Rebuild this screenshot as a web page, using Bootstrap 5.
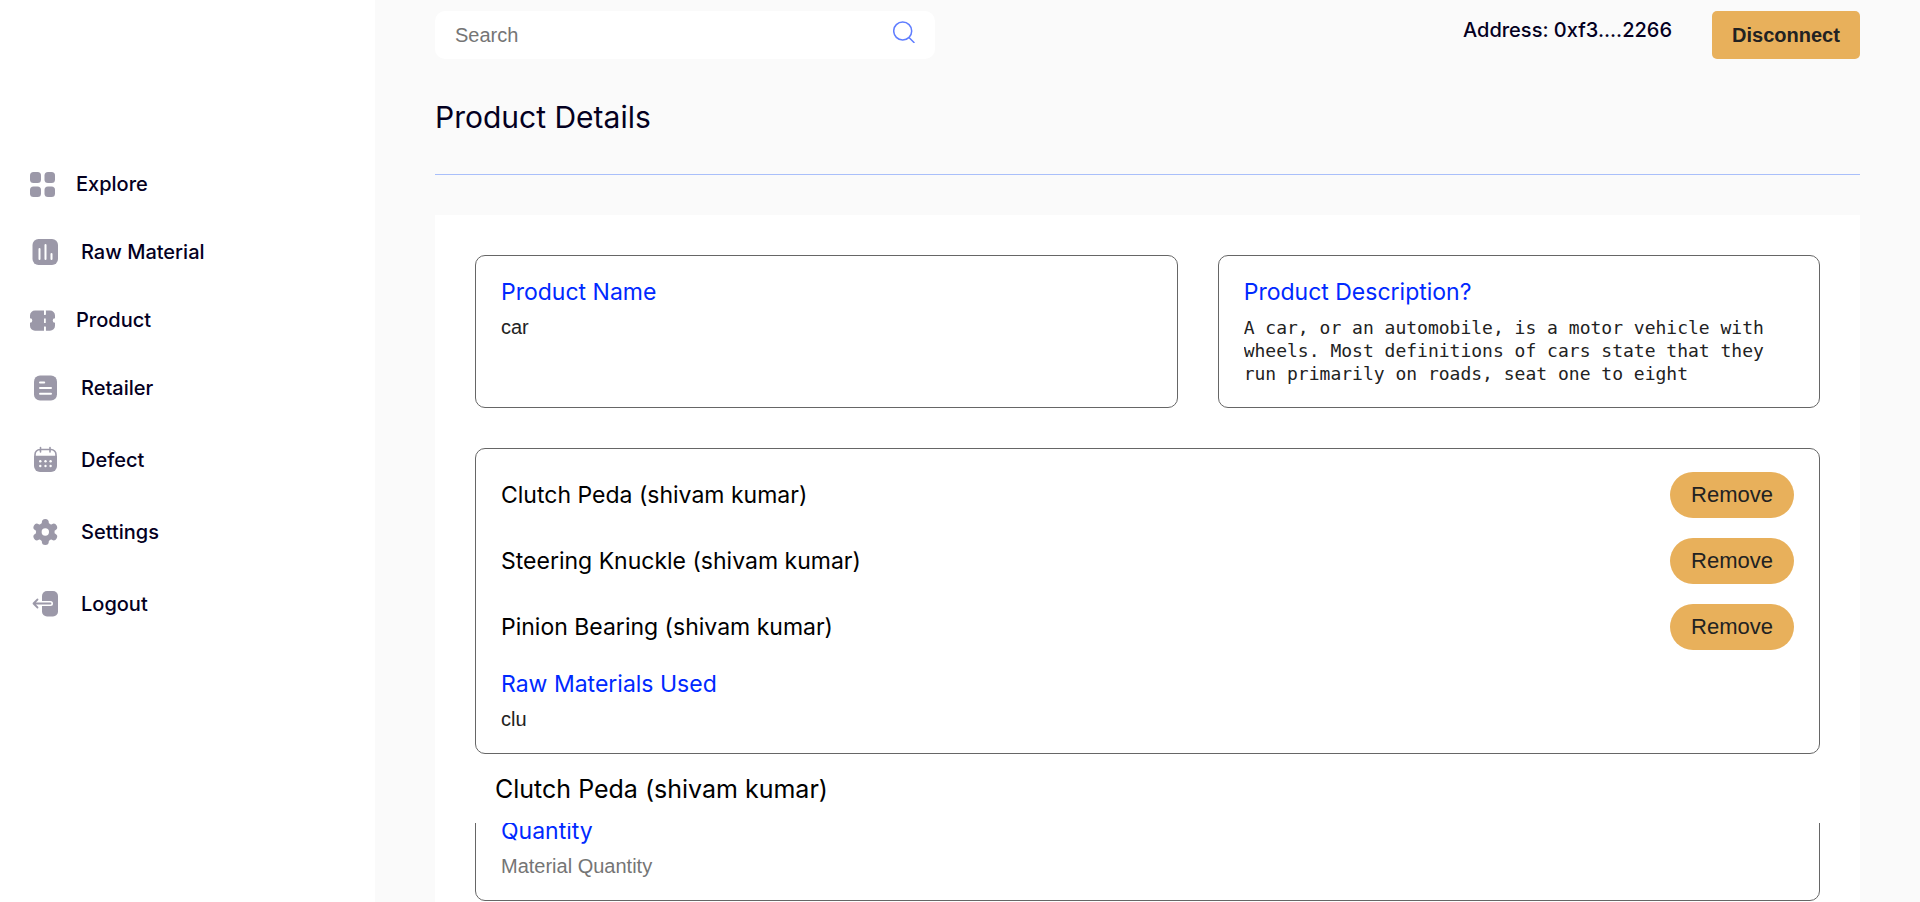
<!DOCTYPE html>
<html lang="en">
<head>
<meta charset="utf-8">
<meta name="viewport" content="width=device-width, initial-scale=1">
<title>Product Details</title>
<link href="https://cdn.jsdelivr.net/npm/bootstrap@5.3.0/dist/css/bootstrap.min.css" rel="stylesheet">
<style>
  :root { --ink: #04001f; --muted-icon: #9b98a8; --gold: #e8b05b; --blue: #0029ff; }
  body { font-family: Inter, sans-serif; background: #fafafa; color: var(--ink); }
  .side { width: 375px; padding: 170px 30px 30px; }
  .side-list { gap: 36px; font-size: 20px; line-height: 24px; font-weight: 500; }
  .side-link { height: 36px; gap: 21px; color: var(--ink); }
  .side-link.compact { height: 28px; }
  .side-link svg { width: 30px; height: 30px; flex: none; fill: var(--muted-icon); }
  .side-link.compact svg { width: 25px; height: 25px; }
  .content { min-width: 0; padding: 11px 60px 0; overflow-y: auto; scrollbar-width: none; }
  .topbar { gap: 40px; margin-bottom: 40px; }
  .search { width: 500px; height: 48px; border-radius: 10px; padding: 0 20px; }
  .plain-field { font-family: "Liberation Sans", Arial, sans-serif; font-size: 20px; line-height: 23px; color: #222; border: 0; padding: 0; background: transparent; outline: 0; display: block; width: 100%; resize: none; overflow: hidden; }
  .plain-field::placeholder { color: #757575; opacity: 1; }
  .plain-field.code-text { font-family: "DejaVu Sans Mono", monospace; font-size: 18px; }
  .search-btn { border: 0; padding: 0 0 6px; background: transparent; }
  .address { font-size: 20px; line-height: 24px; font-weight: 500; padding-top: 7px; }
  .btn-gold, .btn-gold:hover { background: var(--gold); color: #222; border: 0; font-family: "Liberation Sans", Arial, sans-serif; }
  .btn-disconnect { width: 148px; height: 48px; padding: 0; font-size: 20px; font-weight: 700; border-radius: 5px; }
  .btn-remove { width: 124px; height: 46px; padding: 0 0 2px; font-size: 22px; border-radius: 23px; }
  .page-title { font-size: 30px; line-height: 36px; font-weight: 400; margin: 0; padding-bottom: 39px; border-bottom: 1px solid #a9bffa; }
  .panel { margin-top: 40px; padding: 40px; gap: 40px; }
  .field-pair { grid-template-columns: 7fr 6fr; gap: 40px; }
  .field-box { border: 1px solid #666; border-radius: 10px; padding: 22px 25px; }
  .field-box label { display: block; color: var(--blue); font-size: 23px; line-height: 29px; margin-bottom: 9px; }
  .chosen { gap: 20px; margin-bottom: 20px; padding-top: 1px; font-size: 23px; line-height: 29px; color: #000; }
  .suggest { top: calc(100% + 1px); left: -1px; right: -1px; z-index: 2; padding: 19px 20px 18px; font-size: 25px; line-height: 32px; color: #000; }
</style>
</head>
<body>
<div class="d-flex vh-100 overflow-hidden">
  <nav class="side bg-white flex-shrink-0" aria-label="Main">
    <ul class="side-list list-unstyled d-flex flex-column m-0">
      <li><a class="side-link compact d-flex align-items-center text-decoration-none" href="#">
        <svg viewBox="0 0 25 25"><rect width="11" height="11" rx="3.5"/><rect x="14.500" width="10.500" height="11" rx="3.500"/><rect y="14.500" width="11" height="10.500" rx="3.500"/><rect x="14.500" y="14.500" width="10.500" height="10.500" rx="3.500"/></svg>Explore</a></li>
      <li><a class="side-link d-flex align-items-center text-decoration-none" href="#">
        <svg viewBox="0 0 30 30"><rect x="2.500" y="2" width="25.500" height="26" rx="6"/><path d="M9.500 12v10M15.500 8v14M21.500 17v5" fill="none" stroke="#fff" stroke-width="2" stroke-linecap="round"/></svg>Raw Material</a></li>
      <li><a class="side-link compact d-flex align-items-center text-decoration-none" href="#">
        <svg viewBox="0 0 25 25"><path d="M14 2.500v3.500h1.700V2.500H20a5 5 0 0 1 5 5v2.700a2.300 2.300 0 0 0 0 4.600v3a5 5 0 0 1-5 5h-4.300V19H14v3.800H5a5 5 0 0 1-5-5v-3a2.300 2.300 0 0 0 0-4.600V7.500a5 5 0 0 1 5-5z"/><path d="M14.900 2.500V7M14.900 10.500V15M14.900 18.500v4.500" stroke="#fff" stroke-width="1.700" fill="none"/></svg>Product</a></li>
      <li><a class="side-link d-flex align-items-center text-decoration-none" href="#">
        <svg viewBox="0 0 30 30"><rect x="4" y="2.500" width="23" height="25" rx="6"/><path d="M10 9.500h4.200M10 15h11M10 20.800h11" fill="none" stroke="#fff" stroke-width="2" stroke-linecap="round"/></svg>Retailer</a></li>
      <li><a class="side-link d-flex align-items-center text-decoration-none" href="#">
        <svg viewBox="0 0 30 30"><path d="M10.500 2.500v4.500M20 2.500v4.500M5 13V9.500a5 5 0 0 1 5-5h11a5 5 0 0 1 5 5v3" fill="none" stroke="#9b98a8" stroke-width="1.600" stroke-linecap="round"/><path d="M4 10.800h23V21a6 6 0 0 1-6 6H10a6 6 0 0 1-6-6z"/><g fill="#fff"><circle cx="10.300" cy="16.300" r="1.200"/><circle cx="15.500" cy="16.300" r="1.200"/><circle cx="20.600" cy="16.300" r="1.200"/><circle cx="10.300" cy="21" r="1.200"/><circle cx="15.500" cy="21" r="1.200"/><circle cx="20.600" cy="21" r="1.200"/></g></svg>Defect</a></li>
      <li><a class="side-link d-flex align-items-center text-decoration-none" href="#">
        <svg viewBox="0 0 30 30"><g stroke="#9b98a8" stroke-width="7" stroke-linecap="round"><path d="M15.300 5.500v19M7 10.200l16.600 9.600M7 19.800l16.600-9.600"/></g><circle cx="15.300" cy="15" r="9.400"/><circle cx="15.300" cy="15" r="3.700" fill="#fff"/></svg>Settings</a></li>
      <li><a class="side-link d-flex align-items-center text-decoration-none" href="#">
        <svg viewBox="0 0 30 30"><rect x="12" y="2" width="16" height="25.500" rx="5"/><path d="M11 14.500h9.500" stroke="#fff" stroke-width="5" stroke-linecap="round"/><path d="M7.500 10.500l-4 4 4 4M3.500 14.500h17" fill="none" stroke="#9b98a8" stroke-width="1.800" stroke-linecap="round" stroke-linejoin="round"/></svg>Logout</a></li>
    </ul>
  </nav>

  <main class="content flex-grow-1">
    <header class="topbar d-flex align-items-start">
      <form class="search d-flex align-items-center bg-white" role="search">
        <input class="plain-field" type="search" placeholder="Search" aria-label="Search">
        <button class="search-btn" type="button" aria-label="Submit search"><svg class="d-block" width="22" height="22" viewBox="0 0 22 22" fill="none" stroke="#5f7dff" stroke-width="1.500" stroke-linecap="round"><circle cx="9.700" cy="10" r="9"/><path d="M16.500 17l4.500 4.500"/></svg></button>
      </form>
      <span class="address ms-auto">Address: 0xf3....2266</span>
      <button class="btn btn-gold btn-disconnect" type="button">Disconnect</button>
    </header>

    <h1 class="page-title">Product Details</h1>

    <form class="panel bg-white d-flex flex-column">
      <div class="field-pair d-grid">
        <div class="field-box">
          <label for="pname">Product Name</label>
          <input class="plain-field" id="pname" type="text" value="car">
        </div>
        <div class="field-box">
          <label for="pdesc">Product Description?</label>
          <textarea class="plain-field code-text" id="pdesc" rows="3" spellcheck="false">A car, or an automobile, is a motor vehicle with wheels. Most definitions of cars state that they run primarily on roads, seat one to eight</textarea>
        </div>
      </div>

      <div class="field-box position-relative">
        <ul class="chosen list-unstyled d-flex flex-column">
          <li class="d-flex align-items-center justify-content-between">Clutch Peda (shivam kumar)<button class="btn btn-gold btn-remove" type="button">Remove</button></li>
          <li class="d-flex align-items-center justify-content-between">Steering Knuckle (shivam kumar)<button class="btn btn-gold btn-remove" type="button">Remove</button></li>
          <li class="d-flex align-items-center justify-content-between">Pinion Bearing (shivam kumar)<button class="btn btn-gold btn-remove" type="button">Remove</button></li>
        </ul>
        <label for="materials">Raw Materials Used</label>
        <input class="plain-field" id="materials" type="text" value="clu">
        <div class="suggest position-absolute bg-white">Clutch Peda (shivam kumar)</div>
      </div>

      <div class="field-box">
        <label for="qty">Quantity</label>
        <input class="plain-field" id="qty" type="text" placeholder="Material Quantity">
      </div>
    </form>
  </main>
</div>
<script src="https://cdn.jsdelivr.net/npm/bootstrap@5.3.0/dist/js/bootstrap.bundle.min.js"></script>
</body>
</html>
